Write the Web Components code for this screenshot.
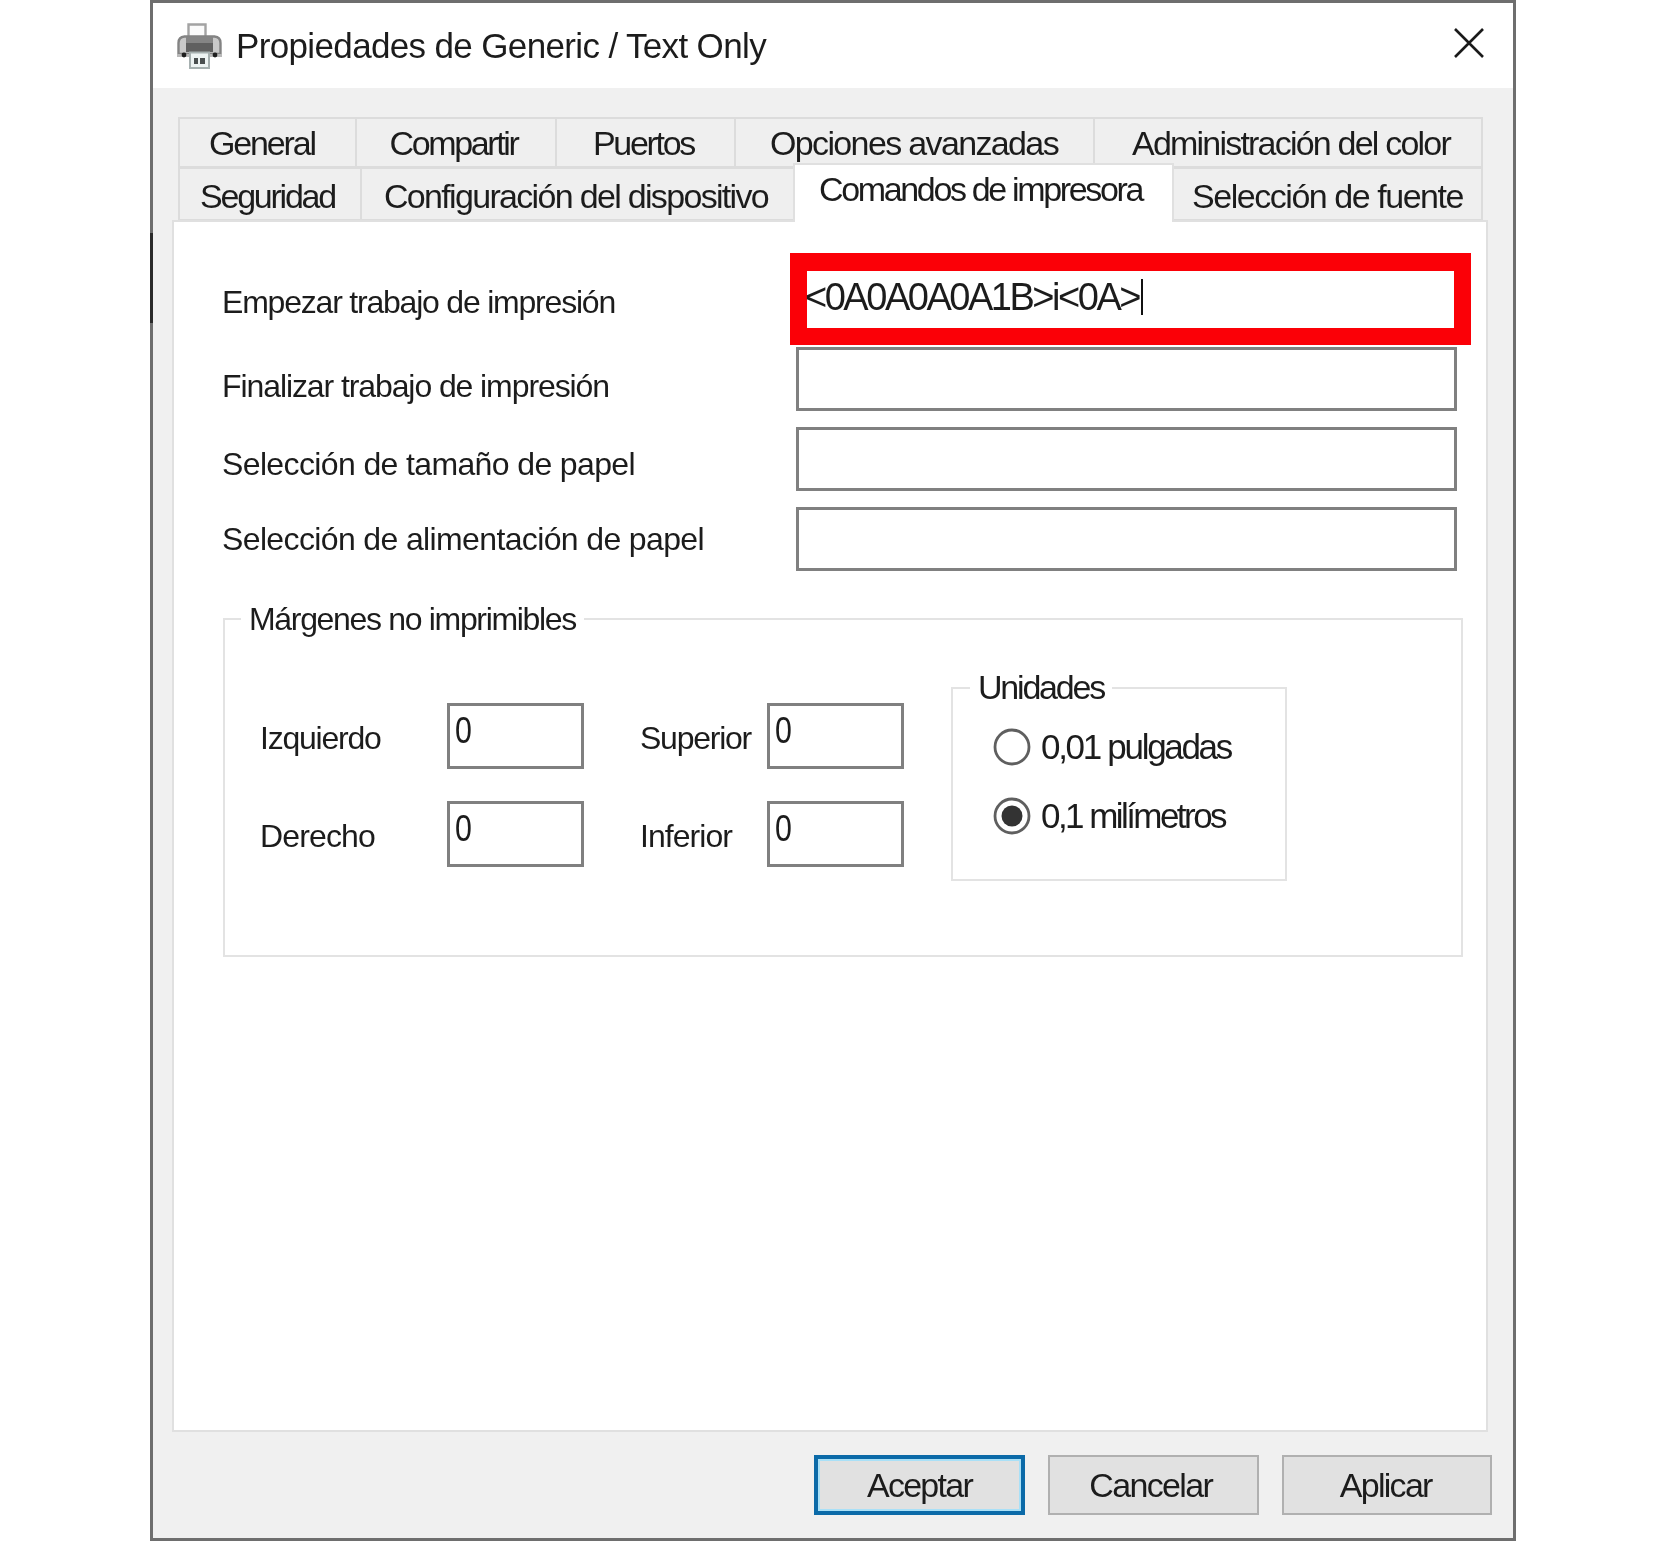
<!DOCTYPE html>
<html lang="es"><head><meta charset="utf-8"><title>Propiedades</title>
<style>
html,body{margin:0;background:#fff}
body{padding-left:150px;font:32px/36px "Liberation Sans",Arial,sans-serif;color:#1c1c1c;width:1366px;height:1541px;overflow:hidden}
</style></head><body>
<ui-dialog>
  <ui-titlebar>
    <svg slot="icon" width="45" height="46" viewBox="0 0 45 46">
      <path d="M11.5 15V1.5h17V15" fill="#fbfbfb" stroke="#a3a3a3" stroke-width="2.4"/>
      <path d="M1.5 31V20q0-6 6-6.5h30q6 .5 6 6.5v11z" fill="#c9c9c9" stroke="#838383" stroke-width="2.4"/>
      <path d="M9 14h27v15H9z" fill="#606060"/>
      <path d="M9 14h27v6H9z" fill="#858585"/>
      <path d="M0 31h45v3H0z" fill="#b9b9b9"/>
      <circle cx="7" cy="32" r="2.4" fill="#1f1f1f"/><circle cx="38" cy="32" r="2.4" fill="#1f1f1f"/>
      <path d="M13 29.5h19V45H13z" fill="#edf3f3" stroke="#a6b0b0" stroke-width="2"/>
      <path d="M17 35h4v6h-4zM23 35h5v6h-5z" fill="#4a4f50"/>
    </svg>
    <ui-t fit="530">Propiedades de Generic / Text Only</ui-t>
    <svg slot="close" width="30" height="30" viewBox="0 0 30 30"><path d="M1 1l28 28M29 1L1 29" stroke="#1a1a1a" stroke-width="2.6" fill="none"/></svg>
  </ui-titlebar>
  <ui-body>
    <ui-tabrow style="height:50px">
      <ui-tab style="--w:178.5px;--x:29px"><ui-t fit="106">General</ui-t></ui-tab>
      <ui-tab style="--w:200.5px;--x:33px"><ui-t fit="128">Compartir</ui-t></ui-tab>
      <ui-tab style="--w:179px;--x:36px"><ui-t fit="101">Puertos</ui-t></ui-tab>
      <ui-tab style="--w:359px;--x:34px"><ui-t fit="288">Opciones avanzadas</ui-t></ui-tab>
      <ui-tab style="--w:388px;--x:37px"><ui-t fit="318">Administración del color</ui-t></ui-tab>
    </ui-tabrow>
    <ui-tabrow style="height:53px">
      <ui-tab low style="--w:184px;--x:20px"><ui-t fit="135">Seguridad</ui-t></ui-tab>
      <ui-tab low style="--w:433px;--x:22px"><ui-t fit="384">Configuración del dispositivo</ui-t></ui-tab>
      <ui-tab active style="--w:379px;--x:24px"><ui-t fit="323">Comandos de impresora</ui-t></ui-tab>
      <ui-tab low style="--w:309px;--x:18px"><ui-t fit="271">Selección de fuente</ui-t></ui-tab>
    </ui-tabrow>
    <ui-panel>
      <ui-form>
        <ui-label style="--dy:6px"><ui-t fit="393">Empezar trabajo de impresión</ui-t></ui-label>
        <ui-highlight><ui-field flush caret><ui-t fit="334">&lt;0A0A0A0A1B&gt;i&lt;0A&gt;</ui-t></ui-field></ui-highlight>
        <ui-label style="--dy:16px"><ui-t fit="387">Finalizar trabajo de impresión</ui-t></ui-label>
        <ui-field></ui-field>
        <ui-label style="--dy:26px"><ui-t fit="413">Selección de tamaño de papel</ui-t></ui-label>
        <ui-field></ui-field>
        <ui-label style="--dy:16px"><ui-t fit="482">Selección de alimentación de papel</ui-t></ui-label>
        <ui-field></ui-field>
      </ui-form>
      <ui-group style="--ml:49px;--mt:30px;--w:1240px;--h:356px;--lm:16px">
        <ui-t slot="legend" fit="327">Márgenes no imprimibles</ui-t>
        <ui-margins>
          <ui-mfield style="--lw:187px;--iw:137px"><ui-t fit="120.6">Izquierdo</ui-t><ui-numbox slot="box">0</ui-numbox></ui-mfield>
          <ui-mfield style="--lw:127px;--iw:137px"><ui-t fit="111">Superior</ui-t><ui-numbox slot="box">0</ui-numbox></ui-mfield>
          <ui-mfield style="--lw:187px;--iw:137px"><ui-t fit="115">Derecho</ui-t><ui-numbox slot="box">0</ui-numbox></ui-mfield>
          <ui-mfield style="--lw:127px;--iw:137px"><ui-t fit="92">Inferior</ui-t><ui-numbox slot="box">0</ui-numbox></ui-mfield>
        </ui-margins>
        <ui-group style="--ml:47px;--mt:32px;--w:336px;--h:212px;--lm:17px">
          <ui-t slot="legend" fit="126" style="font-size:34px">Unidades</ui-t>
          <ui-radios>
            <ui-radio><ui-t fit="190">0,01 pulgadas</ui-t></ui-radio>
            <ui-radio checked><ui-t fit="184">0,1 milímetros</ui-t></ui-radio>
          </ui-radios>
        </ui-group>
      </ui-group>
    </ui-panel>
    <ui-footer>
      <ui-button primary style="--w:211px"><ui-t fit="105">Aceptar</ui-t></ui-button>
      <ui-button style="--w:210.5px;--pr:5px"><ui-t fit="123">Cancelar</ui-t></ui-button>
      <ui-button style="--w:210.5px;--pr:2px"><ui-t fit="92">Aplicar</ui-t></ui-button>
    </ui-footer>
  </ui-body>
</ui-dialog>
<script>
function def(name, html, extra){
  customElements.define(name, class extends HTMLElement{
    constructor(){super();this.attachShadow({mode:'open'}).innerHTML=html;}
    connectedCallback(){extra&&extra.call(this);}
  });
}
def('ui-dialog',`<style>:host{display:flex;flex-direction:column;position:relative;width:1366px;height:1541px;box-sizing:border-box;border:3px solid #6e6e6e;background:#f0f0f0;filter:blur(.7px)}
i{position:absolute;left:-3px;top:230px;width:3px;height:90px;background:#2a2a2a}</style><i></i><slot></slot>`);
def('ui-titlebar',`<style>:host{display:flex;align-items:center;height:85px;background:#fff;padding:0 29px 0 24px;box-sizing:border-box;font-size:35px}
.i{display:flex;margin:1px 14px 0 0}.c{display:flex;margin:-6px 0 0 auto}</style><span class="i"><slot name="icon"></slot></span><span><slot></slot></span><span class="c"><slot name="close"></slot></span>`);
def('ui-body',`<style>:host{display:flex;flex-direction:column;flex:1;padding-top:29px}</style><slot></slot>`);
def('ui-tabrow',`<style>:host{display:flex;margin-left:25px;width:1305px;position:relative}</style><slot></slot>`);
def('ui-tab',`<style>:host{display:flex;align-items:center;box-sizing:border-box;width:var(--w);padding-left:var(--x);background:#efefef;border:solid #dcdcdc;border-width:2px 2px 1px 0;font-size:34px}
:host(:first-child){border-left-width:2px}
:host([low]){padding-top:4px}
:host([active]){background:#fff;height:59px;margin-top:-4px;padding-bottom:10px;border-bottom:0;border-left-width:2px;margin-left:-2px;width:calc(var(--w) + 2px);z-index:2;border-color:#e0e0e0}</style><slot></slot>`);
def('ui-panel',`<style>:host{display:block;box-sizing:border-box;margin-left:19px;width:1316px;height:1212px;background:#fff;border:2px solid #e0e0e0;padding-top:31px}</style><slot></slot>`);
def('ui-form',`<style>:host{display:grid;grid-template-columns:622px 661px;grid-template-rows:92px 66px 80px 80px}</style><slot></slot>`);
def('ui-label',`<style>:host{display:flex;align-items:center;padding:var(--dy) 0 0 48px;box-sizing:border-box}</style><slot></slot>`);
def('ui-highlight',`<style>:host{display:block;box-sizing:border-box;width:681px;height:92px;margin-left:-6px;border:solid #fb0007;border-width:18px 17px 17px}</style><slot></slot>`);
def('ui-field',`<style>:host{display:flex;align-items:center;align-self:end;box-sizing:border-box;height:64px;background:#fff;border:3px solid #808080;white-space:nowrap}
:host([flush]){border:0;height:100%;padding-bottom:6px;font-size:38px}
::slotted(ui-t){margin-left:-2px}
.caret{display:none;width:2px;height:36px;background:#111;margin-left:2px}:host([caret]) .caret{display:block}</style><slot></slot><i class="caret"></i>`);
def('ui-group',`<style>:host{display:block;margin:var(--mt) 0 0 var(--ml);width:var(--w);flex:none}
fieldset{box-sizing:border-box;height:var(--h);margin:0;padding:0;border:2px solid #e3e3e3;display:flex;min-width:0}
legend{margin-left:var(--lm);padding:0 8px;line-height:36px}</style><fieldset><legend><slot name="legend"></slot></legend><slot></slot></fieldset>`);
def('ui-margins',`<style>:host{display:grid;grid-template-columns:324px 264px;grid-template-rows:66px 66px;column-gap:56px;row-gap:32px;margin:66px 0 0 35px;height:164px}</style><slot></slot>`);
def('ui-mfield',`<style>:host{display:flex;align-items:center}
span{display:block;width:var(--lw);padding-top:3px;flex:none}
.b{width:var(--iw);padding:0}</style><span><slot></slot></span><span class="b"><slot name="box"></slot></span>`);
def('ui-numbox',`<style>:host{display:block;box-sizing:border-box;height:66px;background:#fff;border:3px solid #808080;padding:7px 0 0 5px;font-size:37px}
span{display:inline-block;transform:scaleX(.82);transform-origin:left center}</style><span><slot></slot></span>`);
def('ui-radios',`<style>:host{display:flex;flex-direction:column;gap:31px;padding:22px 0 0 40px}</style><slot></slot>`);
def('ui-radio',`<style>:host{display:flex;align-items:center;gap:10px;height:38px;white-space:nowrap;font-size:35px}
svg{flex:none}.d{display:none}:host([checked]) .d{display:block}</style>
<svg width="38" height="38" viewBox="0 0 38 38"><circle cx="19" cy="19" r="17" fill="#fff" stroke="#5f5f5f" stroke-width="2.8"/><circle class="d" cx="19" cy="19" r="10.5" fill="#333"/></svg><slot></slot>`);
def('ui-footer',`<style>:host{display:flex;justify-content:flex-end;gap:23px;padding:23px 21px 0 0}</style><slot></slot>`);
def('ui-button',`<style>:host{display:flex;align-items:center;justify-content:center;box-sizing:border-box;width:var(--w);height:60px;background:#e1e1e1;border:2px solid #b0b0b0;font-size:34px;padding-right:var(--pr,0)}
:host([primary]){border:4px solid #0b6aa8;box-shadow:inset 0 0 0 2px #a9e0f7}</style><slot></slot>`);
def('ui-t',`<style>:host{display:inline-block;white-space:nowrap}</style><slot></slot>`,function(){
  const fit=parseFloat(this.getAttribute('fit'));if(!fit)return;
  const r=document.createRange();r.selectNodeContents(this);
  const w=r.getBoundingClientRect().width,n=this.textContent.length;
  this.style.letterSpacing=((fit-w)/n).toFixed(3)+'px';
});
</script>
</body></html>
